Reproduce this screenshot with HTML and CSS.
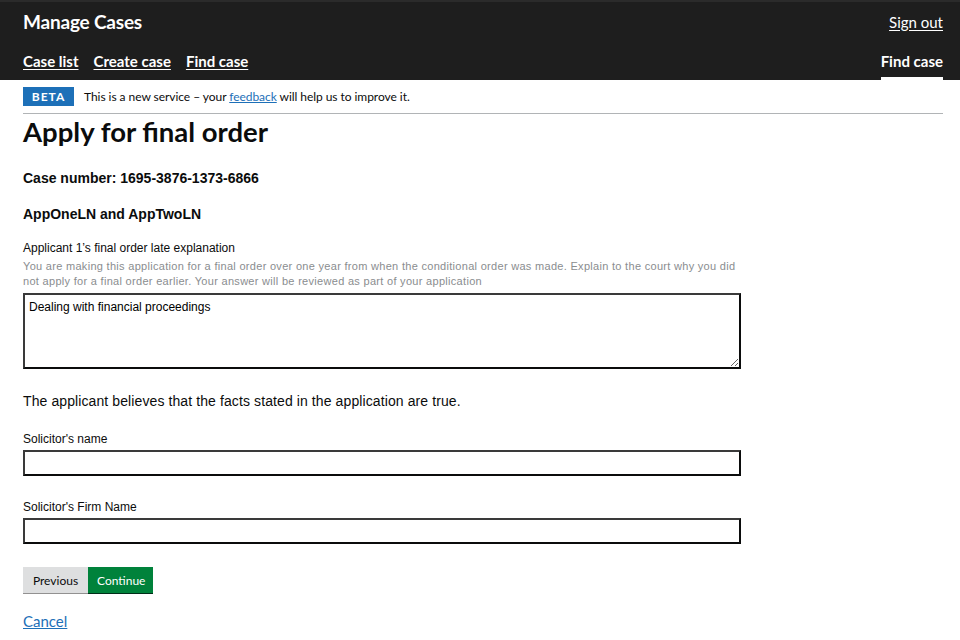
FILE: index.html
```html
<!DOCTYPE html>
<html lang="en">
<head>
<meta charset="utf-8">
<title>Apply for final order</title>
<link rel="stylesheet" href="styles.css">
</head>
<body>
<header class="header">
  <div class="header-top">
    <span class="brand">Manage Cases</span>
    <a class="signout" href="#">Sign out</a>
  </div>
  <nav class="header-nav">
    <div class="nav-left">
      <a href="#">Case list</a>
      <a href="#">Create case</a>
      <a href="#">Find case</a>
    </div>
    <div class="nav-right">
      <span class="active">Find case</span>
    </div>
  </nav>
</header>
<main class="page">
  <div class="phase">
    <strong class="tag">BETA</strong>
    <span class="phase-text">This is a new service – your <a href="#">feedback</a> will help us to improve it.</span>
  </div>
  <h1 class="title">Apply for final order</h1>
  <h2 class="case-number">Case number: 1695-3876-1373-6866</h2>
  <h2 class="parties">AppOneLN and AppTwoLN</h2>

  <div class="field">
    <label class="label">Applicant 1’s final order late explanation</label>
    <p class="hint">You are making this application for a final order over one year from when the conditional order was made. Explain to the court why you did not apply for a final order earlier. Your answer will be reviewed as part of your application</p>
    <textarea class="textarea">Dealing with financial proceedings</textarea>
  </div>

  <p class="statement">The applicant believes that the facts stated in the application are true.</p>

  <div class="field">
    <label class="label">Solicitor's name</label>
    <input class="input" type="text">
  </div>

  <div class="field">
    <label class="label">Solicitor's Firm Name</label>
    <input class="input" type="text">
  </div>

  <div class="buttons">
    <button class="btn btn-secondary">Previous</button>
    <button class="btn btn-primary">Continue</button>
  </div>

  <a class="cancel" href="#">Cancel</a>
</main>
</body>
</html>
```
FILE: styles.css
```css
html, body {
  margin: 0;
  padding: 0;
  background: #ffffff;
}
body {
  font-family: "Liberation Sans", Arial, sans-serif;
  color: #0b0c0c;
}
.header {
  background: #1e1e1e;
  border-top: 2px solid #2b2b2b;
  padding: 0 17px 0 23px;
  font-family: Lato, "Noto Sans", sans-serif;
  color: #fff;
  display: flex;
  flex-direction: column;
  box-sizing: border-box;
  height: 80px;
}
.header-top {
  display: flex;
  justify-content: space-between;
  align-items: center;
  height: 39px;
}
.brand {
  font-weight: 700;
  font-size: 19px;
  letter-spacing: -0.2px;
}
.signout {
  color: #fff;
  font-size: 15px;
  text-decoration: underline;
  text-underline-offset: 2px;
}
.header-nav {
  display: flex;
  justify-content: space-between;
  align-items: flex-end;
  flex: 1;
}
.nav-left {
  display: flex;
  gap: 15px;
  padding-bottom: 10px;
}
.nav-left a {
  color: #fff;
  font-weight: 700;
  font-size: 15px;
  text-decoration: underline;
  text-underline-offset: 2px;
  text-decoration-thickness: 1px;
}
.nav-right .active {
  display: block;
  font-weight: 700;
  font-size: 15px;
  padding-bottom: 7px;
  border-bottom: 3px solid #fff;
}
.page {
  padding: 0 17px 0 23px;
}
.phase {
  display: flex;
  align-items: center;
  gap: 10px;
  padding: 7px 0 7px;
  border-bottom: 1px solid #b1b4b6;
  font-family: Lato, "Noto Sans", sans-serif;
}
.tag {
  background: #1d70b8;
  color: #fff;
  font-size: 12px;
  font-weight: 700;
  letter-spacing: 1px;
  width: 51px;
  height: 19px;
  display: flex;
  align-items: center;
  justify-content: center;
}
.phase-text {
  font-size: 12px;
  color: #0b0c0c;
  letter-spacing: -0.05px;
}
.phase-text a {
  color: #1d70b8;
  text-decoration: underline;
}
.title {
  font-family: Lato, "Noto Sans", sans-serif;
  font-weight: 700;
  font-size: 27.5px;
  margin: 1px 0 0;
  line-height: 34px;
}
.case-number {
  font-size: 14px;
  font-weight: 700;
  margin: 20px 0 0;
  line-height: 18px;
}
.parties {
  font-size: 14px;
  font-weight: 700;
  margin: 18px 0 0;
  line-height: 18px;
}
.field {
  display: flex;
  flex-direction: column;
  width: 718px;
}
.label {
  font-size: 12px;
  line-height: 15px;
  margin-top: 18px;
}
.hint {
  font-size: 11px;
  line-height: 15px;
  color: #8a8d8f;
  margin: 3px 0 4px;
  letter-spacing: 0.3px;
}
.textarea {
  box-sizing: border-box;
  width: 718px;
  height: 76px;
  border: 2px solid #0b0c0c;
  border-color: #3a3a3a #0b0c0c #0b0c0c #3a3a3a;
  font-family: "Liberation Sans", Arial, sans-serif;
  font-size: 12px;
  padding: 5px 4px;
  margin: 0;
  resize: vertical;
}
.statement {
  font-size: 14px;
  margin: 23px 0 0;
  line-height: 18px;
  letter-spacing: 0.1px;
}
.field .label + .input {
  margin-top: 3px;
}
.input {
  box-sizing: border-box;
  width: 718px;
  height: 26px;
  border: 2px solid #0b0c0c;
  border-color: #3a3a3a #0b0c0c #0b0c0c #3a3a3a;
  margin: 0;
  padding: 0 4px;
}
.field + .field .label {
  margin-top: 24px;
}
.statement + .field .label {
  margin-top: 22px;
}
.buttons {
  display: flex;
  margin-top: 23px;
}
.btn {
  font-family: Lato, "Noto Sans", sans-serif;
  font-size: 12px;
  border: none;
  height: 26px;
  padding: 0 9px;
  margin: 0;
  cursor: pointer;
}
.btn-secondary {
  background: #dedfe0;
  color: #0b0c0c;
  width: 65px;
  box-shadow: 0 1px 0 #929191;
}
.btn-primary {
  background: #00823b;
  color: #fff;
  width: 65px;
  box-shadow: 0 1px 0 #002d18;
}
.cancel {
  display: inline-block;
  margin-top: 19px;
  line-height: 18px;
  font-family: Lato, "Noto Sans", sans-serif;
  font-size: 15px;
  color: #1d70b8;
  text-decoration: underline;
}
```
